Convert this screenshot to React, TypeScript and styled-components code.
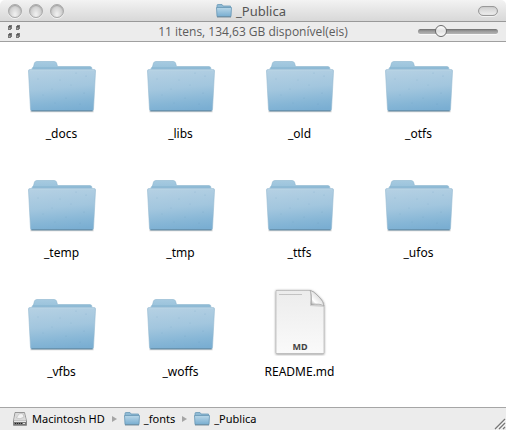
import React, { useState } from "react";
import styled, { createGlobalStyle } from "styled-components";

const GlobalStyle = createGlobalStyle`
  * { box-sizing: border-box; }
  html, body { margin: 0; background: #fff; }
  body, button, input { font-family: "Noto Sans", "Open Sans", sans-serif; }
  button { margin: 0; padding: 0; border: 0; background: none; color: inherit; }
  svg { display: block; flex: none; }
`;

const Window = styled.main`
  display: flex;
  flex-direction: column;
  min-height: 100vh;
  border-radius: 5px 5px 0 0;
  overflow: hidden;
  background: #fff;
  color: #111;
`;

const Bar = styled.header`
  display: grid;
  grid-template-columns: 1fr auto 1fr;
  align-items: center;
  padding: 0 8px;
`;

const TitleBar = styled(Bar)`
  height: 22px;
  background: linear-gradient(#f3f3f3, #e5e5e5 50%, #d8d8d8);
  border-bottom: 1px solid #999;
`;

const StatusBar = styled(Bar)`
  height: 20px;
  background: #ececec;
  border-bottom: 1px solid #a0a0a0;
`;

const WindowButtons = styled.div`
  display: flex;
  gap: 7px;
`;

const RoundButton = styled.button`
  width: 14px;
  height: 14px;
  border: 1px solid #a8a8a8;
  border-radius: 50%;
  background: radial-gradient(ellipse at 50% 80%, #ededed 10%, #d6d6d6 50%, #c0c0c0 90%);
  box-shadow: inset 0 1px 1px #a2a2a2, 0 1px 0 #f2f2f2;
`;

const PillButton = styled.button`
  justify-self: end;
  width: 20px;
  height: 10px;
  border: 1px solid #999;
  border-radius: 5px;
  background: linear-gradient(#cfcfcf, #eeeeee);
  box-shadow: inset 0 0 1px #aaa, 0 1px 0 #f2f2f2;
`;

const Title = styled.h1`
  display: flex;
  align-items: center;
  gap: 4px;
  margin: 0;
  padding-right: 4px;
  font-size: 13px;
  line-height: 20px;
  font-weight: 400;
  color: #555;
`;

const Status = styled.p`
  margin: 0;
  font-family: "Open Sans", "Noto Sans", sans-serif;
  font-size: 12px;
  line-height: 18px;
  color: #5c5c5c;
`;

const ZoomSlider = styled.input`
  appearance: none;
  justify-self: end;
  width: 80px;
  height: 12px;
  margin: 0;
  background: transparent;

  &::-webkit-slider-runnable-track {
    height: 5px;
    border-radius: 3px;
    background: linear-gradient(#6e6e6e, #999 40%, #b6b6b6);
    box-shadow: 0 1px 0 #f8f8f8;
  }
  &::-webkit-slider-thumb {
    appearance: none;
    width: 12px;
    height: 12px;
    margin-top: -4px;
    border: 1px solid #6b6b6b;
    border-radius: 50%;
    background: linear-gradient(#fff, #e2e2e2 50%, #fafafa);
  }
`;

const Files = styled.ul`
  flex: 1;
  display: grid;
  grid-template-columns: repeat(auto-fill, 119px);
  grid-auto-rows: 119px;
  margin: 0;
  padding: 8px 2px 0;
  list-style: none;
`;

const FileButton = styled.button`
  display: flex;
  flex-direction: column;
  align-items: center;
  gap: 8px;
  width: 100%;
  font-size: 12px;
  line-height: 16px;
  color: #000;
`;

const Artwork = styled.span`
  display: flex;
  align-items: flex-end;
  height: 68px;
`;

const PathBar = styled.footer`
  display: flex;
  align-items: center;
  justify-content: space-between;
  height: 23px;
  padding-left: 12px;
  background: #ececec;
  border-top: 1px solid #a6a6a6;
`;

const Crumbs = styled.nav`
  display: flex;
  align-items: center;
  gap: 7px;
`;

const Crumb = styled.a`
  display: flex;
  align-items: center;
  gap: 4px;
  font-size: 11px;
  line-height: 20px;
  color: #000;
  text-decoration: none;
`;

const Grip = styled.svg`
  align-self: flex-end;
`;

const FolderArt = () => (
  <svg width="70" height="60" viewBox="0 0 70 60" aria-hidden="true">
    <defs>
      <linearGradient id="folder-front" x1="0.35" y1="0" x2="0.5" y2="1">
        <stop offset="0" stopColor="#b4d0e3" />
        <stop offset="0.45" stopColor="#a2c6de" />
        <stop offset="0.8" stopColor="#86b6d6" />
        <stop offset="1" stopColor="#7aaed2" />
      </linearGradient>
      <linearGradient id="folder-back" x1="0" y1="0" x2="0" y2="1">
        <stop offset="0" stopColor="#a6cae0" />
        <stop offset="1" stopColor="#8fbcd8" />
      </linearGradient>
    </defs>
    <path d="M3.500 53.500H66.500" stroke="#888" strokeOpacity=".4" strokeWidth="1.500" />
    <path d="M5 16V10.500Q7 9 7.500 5Q8 3.500 10 3.500H27Q29 3.500 29.500 5L30.500 8.500H63Q65 8.500 65 11V16Z" fill="url(#folder-back)" stroke="#8bb5cf" strokeWidth=".6" />
    <path d="M6 10H64" stroke="#7eadca" strokeWidth=".8" />
    <path d="M1.500 13Q1.300 11.500 3 11.500H67Q68.700 11.500 68.500 13L66.500 51.500Q66.400 53 65 53H5Q3.600 53 3.500 51.500Z" fill="url(#folder-front)" stroke="#94b9d0" strokeWidth=".6" />
    <path d="M3 12H67" stroke="#bcd7e7" strokeWidth=".8" />
    <path d="M4.500 52.800H65.500" stroke="#567c96" strokeWidth=".8" />
    <g fill="#5f93b7" opacity=".35">
      <circle cx="49" cy="15" r=".6" /><circle cx="59" cy="18" r=".6" /><circle cx="33" cy="22" r=".5" />
      <circle cx="44" cy="27" r=".5" /><circle cx="25" cy="31" r=".5" /><circle cx="57" cy="35" r=".6" />
      <circle cx="16" cy="37" r=".5" /><circle cx="39" cy="40" r=".6" /><circle cx="53" cy="46" r=".6" />
      <circle cx="28" cy="45" r=".5" /><circle cx="11" cy="21" r=".5" />
    </g>
  </svg>
);

const DocumentArt = () => (
  <svg width="70" height="68" viewBox="0 0 70 68" aria-hidden="true">
    <defs>
      <linearGradient id="paper" x1="0" y1="0" x2="0" y2="1">
        <stop offset="0" stopColor="#ececec" /><stop offset="1" stopColor="#fafafa" />
      </linearGradient>
      <linearGradient id="curl" x1="0.1" y1="0.9" x2="0.6" y2="0.4">
        <stop offset="0" stopColor="#b0b0b0" /><stop offset=".4" stopColor="#fff" /><stop offset="1" stopColor="#e2e2e2" />
      </linearGradient>
      <filter id="paper-shadow" x="-10%" y="-10%" width="120%" height="120%">
        <feDropShadow dx="0" dy=".5" stdDeviation=".8" floodOpacity=".5" />
      </filter>
    </defs>
    <path d="M11 2.500H45Q48 3 51 6L56 11Q59 14 59 18V65.500H11Z" fill="url(#paper)" stroke="#aaa" strokeWidth=".6" filter="url(#paper-shadow)" />
    <path d="M14 6.500H37" stroke="#b8b8b8" strokeWidth=".8" />
    <path d="M45 3V18L59 19Z" fill="#999" opacity=".35" />
    <path d="M45 2.500Q47.500 7 46 16.500Q55 15 59 18Q58 13 55 10L51 6Q48 3 45 2.500Z" fill="url(#curl)" stroke="#888" strokeWidth=".5" />
    <text x="35" y="62" textAnchor="middle" fontFamily="Noto Sans, sans-serif" fontWeight="700" fontSize="9" fill="#444">MD</text>
  </svg>
);

const SmallFolder = () => (
  <svg width="16" height="14" viewBox="0 0 16 14" aria-hidden="true">
    <defs>
      <linearGradient id="small-folder" x1="0" y1="0" x2="0" y2="1">
        <stop offset="0" stopColor="#b9d7e8" /><stop offset="1" stopColor="#78add0" />
      </linearGradient>
    </defs>
    <path d="M1 4V1.500Q1 .500 2 .500H6L7 2H14.500V5H1Z" fill="#8fbad4" stroke="#6b9ab7" strokeWidth=".8" />
    <path d="M.5 3.500H15.500L15 12.500H1Z" fill="url(#small-folder)" stroke="#6797b5" strokeWidth=".8" />
    <path d="M1 13H15" stroke="#627f91" strokeWidth=".8" />
  </svg>
);

const DiskIcon = () => (
  <svg width="16" height="16" viewBox="0 0 16 16" aria-hidden="true">
    <path d="M3 1.500H12.500L14.500 10V14.500H1.500V10Z" fill="#c4c4c4" stroke="#858585" strokeWidth=".8" />
    <path d="M3.500 2H12L14 9H2Z" fill="#dadada" />
    <path d="M4.500 7Q7 1 11 3L12 6Q8 9 4.500 7Z" fill="#f3f3f3" stroke="#aaa" strokeWidth=".5" />
    <path d="M1.500 10H14.500V14H1.500Z" fill="#777" />
    <path d="M2 10.500H14" stroke="#e6e6e6" />
    <path d="M3 12.500H10" stroke="#222" strokeDasharray="1 1" />
    <path d="M11 12.500H13" stroke="#ddd" />
  </svg>
);

const Arrow = () => (
  <svg width="5" height="6" viewBox="0 0 5 6" aria-hidden="true">
    <path d="M0 0L5 3L0 6Z" fill="#a5a5a5" />
  </svg>
);

const GridIcon = () => (
  <svg width="12" height="13" viewBox="0 0 12 13" aria-hidden="true">
    {[[0, 0], [8, 0], [0, 8], [8, 8]].map(([x, y]) => (
      <g key={`${x}-${y}`} transform={`translate(${x} ${y})`}>
        <path d="M0 1H1V0H4V4H3V5H0Z" fill="#777" />
        <path d="M1 1H3V2H1Z" fill="#555" />
        <path d="M1 3H2V4H1Z" fill="#aaa" />
      </g>
    ))}
  </svg>
);

const names = ["_docs", "_libs", "_old", "_otfs", "_temp", "_tmp", "_ttfs", "_ufos", "_vfbs", "_woffs", "README.md"];

export default function App() {
  const [zoom, setZoom] = useState(25);
  return (
    <>
      <GlobalStyle />
      <Window>
        <TitleBar>
          <WindowButtons>
            <RoundButton type="button" aria-label="Fechar" />
            <RoundButton type="button" aria-label="Minimizar" />
            <RoundButton type="button" aria-label="Ampliar" />
          </WindowButtons>
          <Title><SmallFolder />_Publica</Title>
          <PillButton type="button" aria-label="Barra de ferramentas" />
        </TitleBar>
        <StatusBar as="div">
          <GridIcon />
          <Status>11 itens, 134,63 GB disponível(eis)</Status>
          <ZoomSlider type="range" aria-label="Tamanho dos ícones" value={zoom} onChange={(e) => setZoom(Number(e.target.value))} />
        </StatusBar>
        <Files>
          {names.map((name) => (
            <li key={name}>
              <FileButton type="button">
                <Artwork>{name.endsWith(".md") ? <DocumentArt /> : <FolderArt />}</Artwork>
                {name}
              </FileButton>
            </li>
          ))}
        </Files>
        <PathBar>
          <Crumbs aria-label="Caminho">
            <Crumb href="#hd"><DiskIcon />Macintosh HD</Crumb>
            <Arrow />
            <Crumb href="#fonts"><SmallFolder />_fonts</Crumb>
            <Arrow />
            <Crumb href="#publica"><SmallFolder />_Publica</Crumb>
          </Crumbs>
          <Grip width="12" height="12" viewBox="0 0 12 12" aria-hidden="true">
            <path d="M1 11L11 1M5 11L11 5M9 11L11 9" stroke="#777" strokeWidth="1.200" />
            <path d="M2 12L12 2M6 12L12 6" stroke="#fff" strokeWidth=".6" />
          </Grip>
        </PathBar>
      </Window>
    </>
  );
}
